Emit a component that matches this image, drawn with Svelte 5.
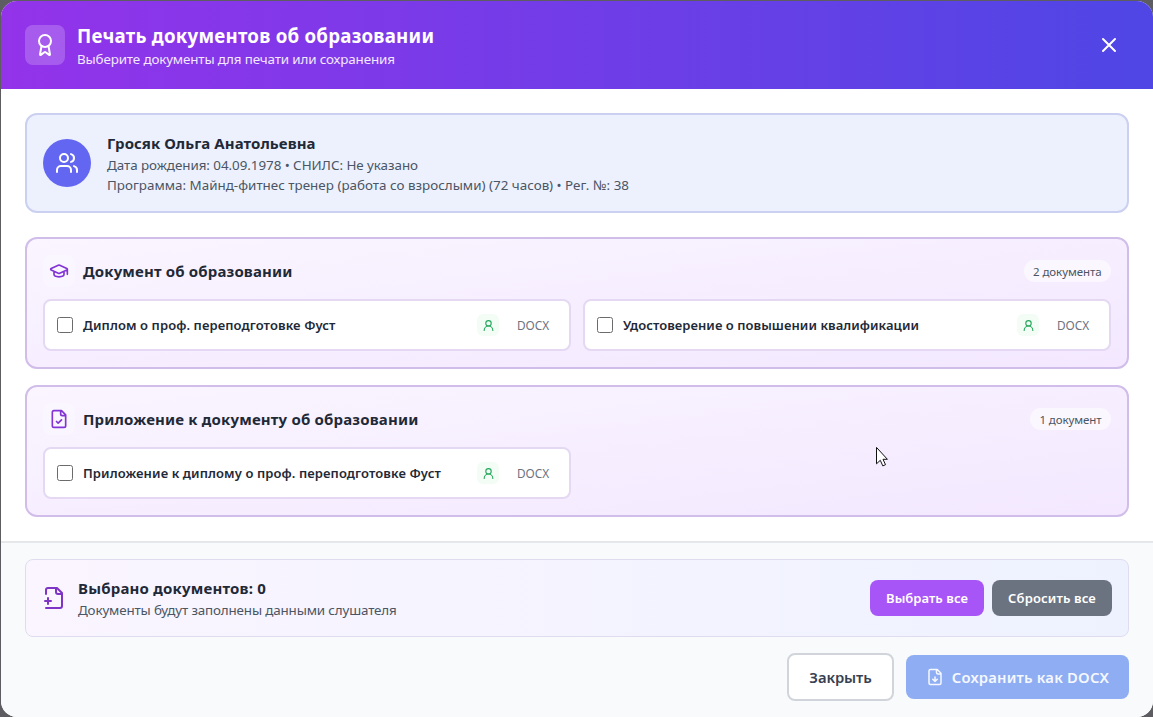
<script>
  let groups = $state([
    {
      title: 'Документ об образовании',
      icon: 'cap',
      count: '2 документа',
      track: 0.15,
      items: [
        { name: 'Диплом о проф. переподготовке Фуст', track: 0.1, checked: false },
        { name: 'Удостоверение о повышении квалификации', track: 0.05, checked: false },
      ],
    },
    {
      title: 'Приложение к документу об образовании',
      icon: 'check',
      count: '1 документ',
      track: 0.17,
      items: [{ name: 'Приложение к диплому о проф. переподготовке Фуст', track: 0.1, checked: false }],
    },
  ]);
  let selected = $derived(groups.flatMap((g) => g.items).filter((i) => i.checked).length);

  function setAll(value) {
    for (const g of groups) for (const i of g.items) i.checked = value;
  }
</script>

<div class="backdrop">
  <div class="modal">
    <header>
      <span class="badge">
        <svg class="i24" viewBox="0 0 24 24"><path d="m15.477 12.89 1.515 8.526a.5.5 0 0 1-.81.47l-3.58-2.687a1 1 0 0 0-1.197 0l-3.586 2.686a.5.5 0 0 1-.81-.469l1.514-8.526" /><circle cx="12" cy="8" r="6" /></svg>
      </span>
      <div class="heading">
        <h1>Печать документов об образовании</h1>
        <p>Выберите документы для печати или сохранения</p>
      </div>
      <button class="close" aria-label="Закрыть окно">
        <svg class="i24" viewBox="0 0 24 24"><path d="M18 6 6 18M6 6l12 12" /></svg>
      </button>
    </header>

    <main>
      <section class="student">
        <span class="avatar">
          <svg class="i24" viewBox="0 0 24 24"><path d="M16 21v-2a4 4 0 0 0-4-4H6a4 4 0 0 0-4 4v2" /><circle cx="9" cy="7" r="4" /><path d="M22 21v-2a4 4 0 0 0-3-3.87M16 3.13a4 4 0 0 1 0 7.75" /></svg>
        </span>
        <div>
          <h2>Гросяк Ольга Анатольевна</h2>
          <p>Дата рождения: 04.09.1978 • СНИЛС: Не указано</p>
          <p class="program">Программа: Майнд-фитнес тренер (работа со взрослыми) (72 часов) • Рег. №: 38</p>
        </div>
      </section>

      <div class="groups">
        {#each groups as group}
          <section class="group">
            <div class="group-head">
              <span class="group-icon">
                {#if group.icon === 'cap'}
                  <svg class="i20" viewBox="0 0 24 24"><path d="M21.42 10.922a1 1 0 0 0-.019-1.838L12.83 5.18a2 2 0 0 0-1.66 0L2.6 9.08a1 1 0 0 0 0 1.832l8.57 3.908a2 2 0 0 0 1.66 0zM22 10v6M6 12.5V16a6 3 0 0 0 12 0v-3.5" /></svg>
                {:else}
                  <svg class="i20" viewBox="0 0 24 24"><path d="M15 2H6a2 2 0 0 0-2 2v16a2 2 0 0 0 2 2h12a2 2 0 0 0 2-2V7ZM14 2v4a2 2 0 0 0 2 2h4M9 15l2 2 4-4" /></svg>
                {/if}
              </span>
              <h3 style="letter-spacing: {group.track}px">{group.title}</h3>
              <span class="count">{group.count}</span>
            </div>
            <div class="items">
              {#each group.items as item}
                <label class="item">
                  <input type="checkbox" bind:checked={item.checked} />
                  <span class="name" style="letter-spacing: {item.track}px">{item.name}</span>
                  <span class="person">
                    <svg class="i13" viewBox="0 0 24 24"><circle cx="12" cy="8" r="5" /><path d="M20 21a8 8 0 0 0-16 0" /></svg>
                  </span>
                  <span class="format">DOCX</span>
                </label>
              {/each}
            </div>
          </section>
        {/each}
      </div>
    </main>

    <footer>
      <div class="summary">
        <svg class="i24 plus" viewBox="0 0 24 24"><path d="M4 22h14a2 2 0 0 0 2-2V7l-5-5H6a2 2 0 0 0-2 2v4M14 2v4a2 2 0 0 0 2 2h4M3 15h6M6 12v6" /></svg>
        <div class="summary-text">
          <strong>Выбрано документов: {selected}</strong>
          <p>Документы будут заполнены данными слушателя</p>
        </div>
        <button class="all" onclick={() => setAll(true)}>Выбрать все</button>
        <button class="reset" onclick={() => setAll(false)}>Сбросить все</button>
      </div>
      <div class="actions">
        <button class="cancel">Закрыть</button>
        <button class="save">
          <svg class="i18" viewBox="0 0 24 24"><path d="M15 2H6a2 2 0 0 0-2 2v16a2 2 0 0 0 2 2h12a2 2 0 0 0 2-2V7ZM14 2v4a2 2 0 0 0 2 2h4M12 18v-6M9 15l3 3 3-3" /></svg>
          Сохранить как DOCX
        </button>
      </div>
    </footer>
  </div>
  <svg class="cursor" viewBox="0 0 13 20"><path d="M.5.8v16l3.8-3.5 2.5 5.6 2.7-1.2-2.5-5.4h4z" /></svg>
</div>

<style>
  :global(body) {
    overflow: hidden;
  }
  .backdrop {
    box-sizing: border-box;
    position: relative;
    height: 717px;
    padding: 1px 0 0 1px;
    background: #5d5c60;
    font-family: "Noto Sans", "Open Sans", sans-serif;
    color: #1f2937;
  }
  .modal {
    display: flex;
    flex-direction: column;
    height: 716px;
    border-radius: 16px;
    overflow: hidden;
    background: #fff;
  }
  .modal * {
    box-sizing: border-box;
  }
  h1, h2, h3, p {
    margin: 0;
    white-space: nowrap;
  }
  svg {
    display: block;
    flex: none;
    fill: none;
    stroke: currentColor;
    stroke-width: 2;
    stroke-linecap: round;
    stroke-linejoin: round;
  }
  .i24 { width: 24px; height: 24px; }
  .i20 { width: 20px; height: 20px; }
  .i18 { width: 18px; height: 18px; }
  .i13 { width: 13px; height: 13px; }
  button {
    display: flex;
    align-items: center;
    justify-content: center;
    flex: none;
    margin: 0;
    padding: 0;
    border: 0;
    font-family: inherit;
    white-space: nowrap;
  }
  p {
    font-size: 13.4px;
    line-height: 20px;
    color: #4b5563;
  }
  header {
    display: flex;
    align-items: center;
    gap: 12px;
    height: 88px;
    flex: none;
    padding: 0 24px;
    background: linear-gradient(to right, #9333ea, #4f46e5);
    color: #fff;
  }
  .badge {
    display: grid;
    place-items: center;
    width: 40px;
    height: 40px;
    border-radius: 8px;
    background: rgba(255, 255, 255, 0.2);
  }
  .heading { flex: 1; }
  h1 {
    padding-top: 2px;
    font-size: 18.7px;
    line-height: 26px;
    font-weight: 700;
    letter-spacing: 0.23px;
  }
  .heading p {
    color: #f3e8ff;
    letter-spacing: -0.14px;
  }
  .close {
    width: 40px;
    height: 40px;
    background: none;
    color: #fff;
  }
  main {
    flex: none;
    padding: 24px;
  }
  .student {
    display: flex;
    align-items: center;
    gap: 16px;
    padding: 16px;
    margin-bottom: 24px;
    border: 2px solid #cbd0f1;
    border-radius: 12px;
    background: #edf1fe;
  }
  .avatar {
    display: grid;
    place-items: center;
    width: 48px;
    height: 48px;
    border-radius: 50%;
    background: #6366f1;
    color: #fff;
  }
  h2, h3, strong {
    font-size: 15px;
    line-height: 24px;
    font-weight: 700;
    color: #1f2937;
  }
  h2 { letter-spacing: 0.07px; }
  .student p { letter-spacing: -0.05px; }
  .student .program { letter-spacing: 0.01px; }
  .groups {
    display: flex;
    flex-direction: column;
    gap: 16px;
  }
  .group {
    padding: 16px;
    border: 2px solid #d0bde9;
    border-radius: 12px;
    background: linear-gradient(to bottom right, #faf5ff, #f3e8ff);
  }
  .group-head {
    display: flex;
    align-items: center;
    gap: 8px;
    height: 32px;
    margin-bottom: 12px;
  }
  .group-icon {
    display: grid;
    place-items: center;
    width: 32px;
    height: 32px;
    border-radius: 8px;
    background: rgba(255, 255, 255, 0.25);
    color: #8234d4;
  }
  h3 { flex: 1; }
  .count {
    padding: 1px 9.5px 0;
    border-radius: 11px;
    background: rgba(255, 255, 255, 0.55);
    font-size: 11.5px;
    line-height: 21px;
    letter-spacing: -0.08px;
    color: #4b5563;
  }
  .items {
    display: grid;
    grid-template-columns: 1fr 1fr;
    gap: 12px;
  }
  .item {
    display: flex;
    align-items: center;
    height: 52px;
    padding: 0 12px;
    border: 2px solid #e4d8f3;
    border-radius: 8px;
    background: #fff;
  }
  input {
    appearance: none;
    width: 16px;
    height: 16px;
    margin: 0 10px 0 0;
    border: 1px solid #6b6b6b;
    border-radius: 2.5px;
    background: #fff;
  }
  input:checked { background: #9333ea; }
  .name {
    flex: 1;
    font-size: 13px;
    font-weight: 600;
    line-height: 20px;
    white-space: nowrap;
  }
  .person {
    display: grid;
    place-items: center;
    width: 22px;
    height: 22px;
    margin-right: 10px;
    border-radius: 6px;
    background: #f3fdf6;
    color: #22a558;
  }
  .format {
    width: 48px;
    text-align: center;
    font-size: 11.8px;
    line-height: 16px;
    color: #6b7280;
  }
  footer {
    flex: 1;
    padding: 16px 24px;
    border-top: 2px solid #e5e7eb;
    background: #f9fafc;
  }
  .summary {
    display: flex;
    align-items: center;
    height: 78px;
    padding: 0 16px;
    margin-bottom: 16px;
    border: 1px solid #dfdcf0;
    border-radius: 8px;
    background: linear-gradient(to right, #faf5ff, #eef2ff);
  }
  .plus { color: #7e34c4; }
  .summary-text {
    flex: 1;
    padding-left: 12px;
  }
  .summary-text p { letter-spacing: -0.15px; }
  strong {
    display: block;
    letter-spacing: 0.2px;
  }
  .all, .reset {
    height: 36px;
    border-radius: 8px;
    font-size: 13px;
    font-weight: 600;
    color: #fff;
  }
  .all {
    width: 114px;
    background: #a855f7;
    letter-spacing: 0.04px;
  }
  .reset {
    width: 120px;
    margin-left: 8px;
    background: #6b7280;
    letter-spacing: 0.13px;
  }
  .actions {
    display: flex;
    align-items: center;
    justify-content: flex-end;
    gap: 12px;
  }
  .cancel {
    width: 107px;
    height: 48px;
    border: 2px solid #d1d5db;
    border-radius: 8px;
    background: #fff;
    font-size: 14.8px;
    font-weight: 600;
    letter-spacing: -0.1px;
    color: #374151;
  }
  .save {
    gap: 8px;
    width: 223px;
    height: 44px;
    border-radius: 8px;
    background: #8fadf2;
    font-size: 14.8px;
    font-weight: 600;
    letter-spacing: 0.2px;
    color: #f5f8ff;
  }
  .cursor {
    position: absolute;
    left: 876px;
    top: 447px;
    width: 13px;
    height: 20px;
    fill: #fff;
    stroke: #111;
    stroke-width: 1;
    stroke-linejoin: miter;
    pointer-events: none;
  }
</style>
